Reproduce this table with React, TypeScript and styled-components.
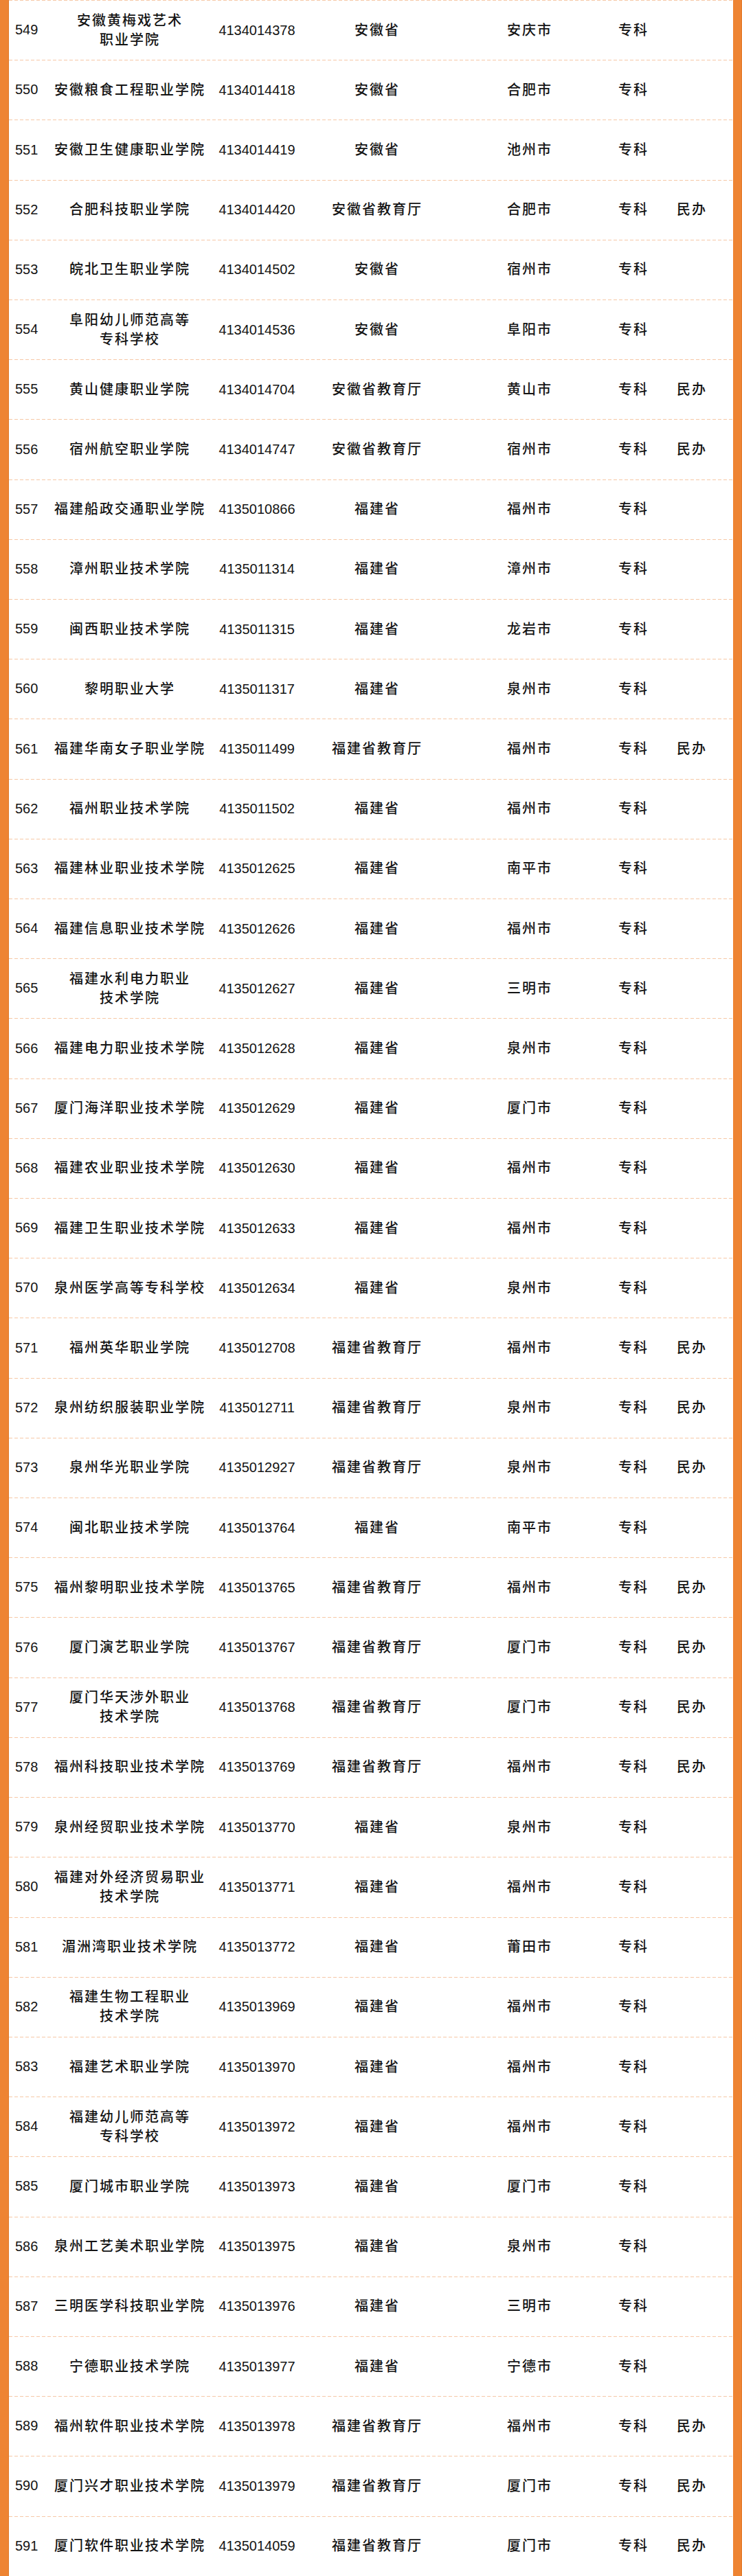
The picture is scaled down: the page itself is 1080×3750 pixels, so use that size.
import styled, { createGlobalStyle } from "styled-components";

type School = {
    no: number;
    name: string;
    code: string;
    dept: string;
    city: string;
    level: string;
    kind?: string;
};

const rows: School[] = [
    { no: 549, name: "安徽黄梅戏艺术\n职业学院", code: "4134014378", dept: "安徽省", city: "安庆市", level: "专科" },
    { no: 550, name: "安徽粮食工程职业学院", code: "4134014418", dept: "安徽省", city: "合肥市", level: "专科" },
    { no: 551, name: "安徽卫生健康职业学院", code: "4134014419", dept: "安徽省", city: "池州市", level: "专科" },
    { no: 552, name: "合肥科技职业学院", code: "4134014420", dept: "安徽省教育厅", city: "合肥市", level: "专科", kind: "民办" },
    { no: 553, name: "皖北卫生职业学院", code: "4134014502", dept: "安徽省", city: "宿州市", level: "专科" },
    { no: 554, name: "阜阳幼儿师范高等\n专科学校", code: "4134014536", dept: "安徽省", city: "阜阳市", level: "专科" },
    { no: 555, name: "黄山健康职业学院", code: "4134014704", dept: "安徽省教育厅", city: "黄山市", level: "专科", kind: "民办" },
    { no: 556, name: "宿州航空职业学院", code: "4134014747", dept: "安徽省教育厅", city: "宿州市", level: "专科", kind: "民办" },
    { no: 557, name: "福建船政交通职业学院", code: "4135010866", dept: "福建省", city: "福州市", level: "专科" },
    { no: 558, name: "漳州职业技术学院", code: "4135011314", dept: "福建省", city: "漳州市", level: "专科" },
    { no: 559, name: "闽西职业技术学院", code: "4135011315", dept: "福建省", city: "龙岩市", level: "专科" },
    { no: 560, name: "黎明职业大学", code: "4135011317", dept: "福建省", city: "泉州市", level: "专科" },
    { no: 561, name: "福建华南女子职业学院", code: "4135011499", dept: "福建省教育厅", city: "福州市", level: "专科", kind: "民办" },
    { no: 562, name: "福州职业技术学院", code: "4135011502", dept: "福建省", city: "福州市", level: "专科" },
    { no: 563, name: "福建林业职业技术学院", code: "4135012625", dept: "福建省", city: "南平市", level: "专科" },
    { no: 564, name: "福建信息职业技术学院", code: "4135012626", dept: "福建省", city: "福州市", level: "专科" },
    { no: 565, name: "福建水利电力职业\n技术学院", code: "4135012627", dept: "福建省", city: "三明市", level: "专科" },
    { no: 566, name: "福建电力职业技术学院", code: "4135012628", dept: "福建省", city: "泉州市", level: "专科" },
    { no: 567, name: "厦门海洋职业技术学院", code: "4135012629", dept: "福建省", city: "厦门市", level: "专科" },
    { no: 568, name: "福建农业职业技术学院", code: "4135012630", dept: "福建省", city: "福州市", level: "专科" },
    { no: 569, name: "福建卫生职业技术学院", code: "4135012633", dept: "福建省", city: "福州市", level: "专科" },
    { no: 570, name: "泉州医学高等专科学校", code: "4135012634", dept: "福建省", city: "泉州市", level: "专科" },
    { no: 571, name: "福州英华职业学院", code: "4135012708", dept: "福建省教育厅", city: "福州市", level: "专科", kind: "民办" },
    { no: 572, name: "泉州纺织服装职业学院", code: "4135012711", dept: "福建省教育厅", city: "泉州市", level: "专科", kind: "民办" },
    { no: 573, name: "泉州华光职业学院", code: "4135012927", dept: "福建省教育厅", city: "泉州市", level: "专科", kind: "民办" },
    { no: 574, name: "闽北职业技术学院", code: "4135013764", dept: "福建省", city: "南平市", level: "专科" },
    { no: 575, name: "福州黎明职业技术学院", code: "4135013765", dept: "福建省教育厅", city: "福州市", level: "专科", kind: "民办" },
    { no: 576, name: "厦门演艺职业学院", code: "4135013767", dept: "福建省教育厅", city: "厦门市", level: "专科", kind: "民办" },
    { no: 577, name: "厦门华天涉外职业\n技术学院", code: "4135013768", dept: "福建省教育厅", city: "厦门市", level: "专科", kind: "民办" },
    { no: 578, name: "福州科技职业技术学院", code: "4135013769", dept: "福建省教育厅", city: "福州市", level: "专科", kind: "民办" },
    { no: 579, name: "泉州经贸职业技术学院", code: "4135013770", dept: "福建省", city: "泉州市", level: "专科" },
    { no: 580, name: "福建对外经济贸易职业\n技术学院", code: "4135013771", dept: "福建省", city: "福州市", level: "专科" },
    { no: 581, name: "湄洲湾职业技术学院", code: "4135013772", dept: "福建省", city: "莆田市", level: "专科" },
    { no: 582, name: "福建生物工程职业\n技术学院", code: "4135013969", dept: "福建省", city: "福州市", level: "专科" },
    { no: 583, name: "福建艺术职业学院", code: "4135013970", dept: "福建省", city: "福州市", level: "专科" },
    { no: 584, name: "福建幼儿师范高等\n专科学校", code: "4135013972", dept: "福建省", city: "福州市", level: "专科" },
    { no: 585, name: "厦门城市职业学院", code: "4135013973", dept: "福建省", city: "厦门市", level: "专科" },
    { no: 586, name: "泉州工艺美术职业学院", code: "4135013975", dept: "福建省", city: "泉州市", level: "专科" },
    { no: 587, name: "三明医学科技职业学院", code: "4135013976", dept: "福建省", city: "三明市", level: "专科" },
    { no: 588, name: "宁德职业技术学院", code: "4135013977", dept: "福建省", city: "宁德市", level: "专科" },
    { no: 589, name: "福州软件职业技术学院", code: "4135013978", dept: "福建省教育厅", city: "福州市", level: "专科", kind: "民办" },
    { no: 590, name: "厦门兴才职业技术学院", code: "4135013979", dept: "福建省教育厅", city: "厦门市", level: "专科", kind: "民办" },
    { no: 591, name: "厦门软件职业技术学院", code: "4135014059", dept: "福建省教育厅", city: "厦门市", level: "专科", kind: "民办" },
];

function App() {
    return (
        <>
            <GlobalStyle/>
            <StyledPage>
                <StyledSideBar/>
                <StyledTable>
                    {rows.map((r) => (
                        <StyledRow key={r.no}>
                            <StyledNumber>{r.no}</StyledNumber>
                            <StyledCell $cjk>{r.name}</StyledCell>
                            <StyledCell>{r.code}</StyledCell>
                            <StyledCell $cjk>{r.dept}</StyledCell>
                            <StyledCell $cjk>{r.city}</StyledCell>
                            <StyledCell $cjk>{r.level}</StyledCell>
                            <StyledCell $cjk>{r.kind ?? ""}</StyledCell>
                        </StyledRow>
                    ))}
                </StyledTable>
                <StyledSideBar/>
            </StyledPage>
        </>
    )
}

const GlobalStyle = createGlobalStyle`
    html, body {
        margin: 0;
        padding: 0;
        background: #fff;
    }
`

const StyledPage = styled.div`
    display: flex;
    width: 1080px;
    height: 3750px;
    overflow: hidden;
    background: #fff;
    font-family: "Liberation Sans", "Noto Sans CJK SC", sans-serif;
    color: #141414;
`

const StyledSideBar = styled.div`
    width: 13px;
    flex-shrink: 0;
    background: #ee8433;
    box-shadow: inset -1px 0 0 #e07a2c;
`

const StyledTable = styled.div`
    flex: 1;
    display: flex;
    flex-direction: column;
`

const StyledRow = styled.div`
    display: grid;
    grid-template-columns: 65px 220px 152px 196px 248px 54px 116px;
    align-items: center;
    height: calc(3750px / 43);
    flex-shrink: 0;
    box-sizing: border-box;
    background-image: linear-gradient(to right, #f6c8a6 5px, transparent 5px);
    background-size: 8px 1px;
    background-repeat: repeat-x;
    background-position: 0 0;
`

const StyledNumber = styled.div`
    padding-left: 9px;
    font-size: 20px;
`

const StyledCell = styled.div<{ $cjk?: boolean }>`
    text-align: center;
    white-space: pre-line;
    font-size: 20px;
    line-height: 28px;
    font-weight: ${(p) => (p.$cjk ? 500 : 400)};
    letter-spacing: ${(p) => (p.$cjk ? "2px" : "0")};
    margin-right: ${(p) => (p.$cjk ? "-2px" : "0")};
`

export default App;
